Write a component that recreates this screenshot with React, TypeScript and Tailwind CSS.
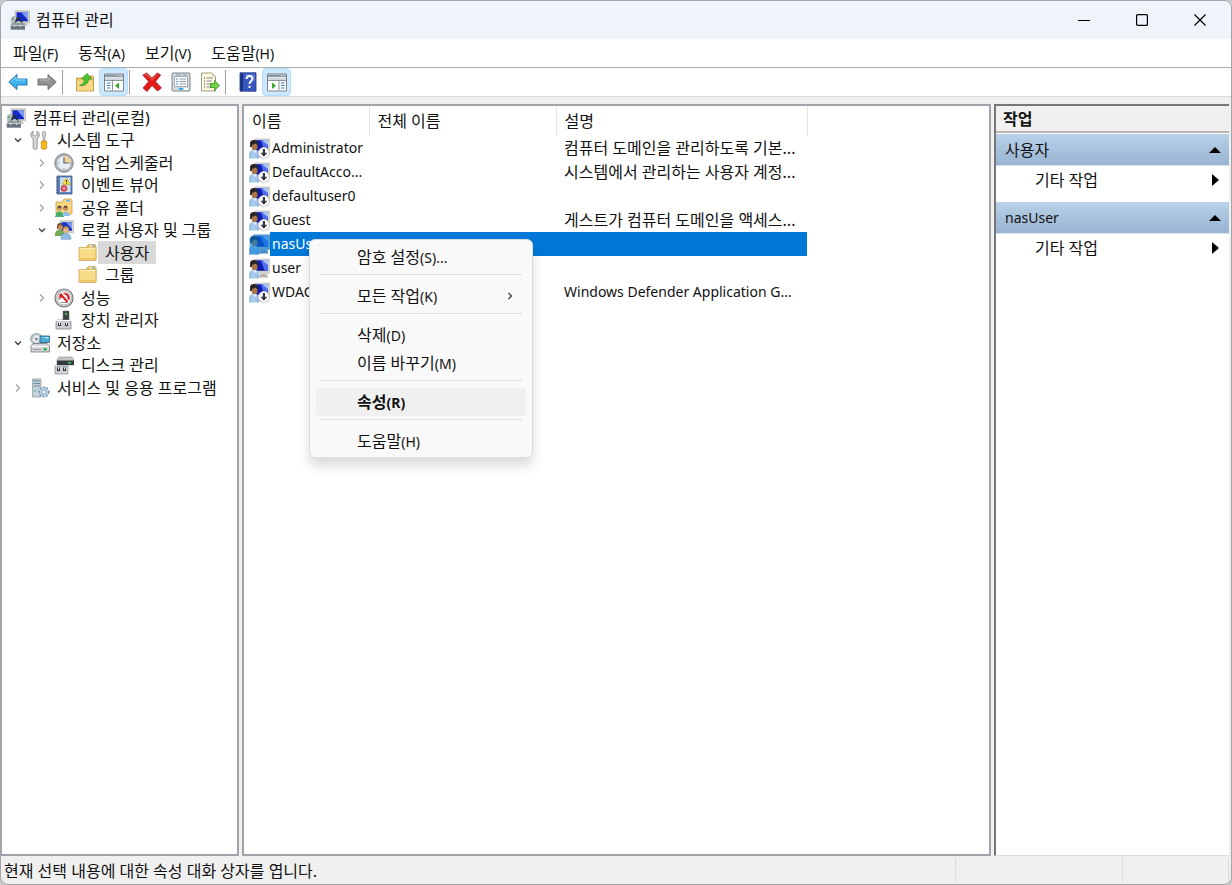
import { ReactNode } from "react";
import clsx from "clsx";

type IconProps = { className?: string };

interface TreeNode {
    id: string;
    label: string;
    depth: 0 | 1 | 2 | 3;
    icon: ReactNode;
    state?: "open" | "closed";
    selected?: boolean;
}

interface User {
    name: string;
    description: string;
    status: "disabled" | "active";
    selected?: boolean;
}

const Svg = ({ children, className = "w-5 h-5" }: IconProps & { children: ReactNode }) => (
    <svg viewBox="0 0 20 20" className={clsx("shrink-0", className)} aria-hidden="true">
        {children}
    </svg>
);

const ComputerIcon = () => (
    <Svg>
        <path d="M5 .8h14.500v12H5z" fill="#d6d3ca" stroke="#aaa79e" strokeWidth=".6" />
        <path d="M6.500 2.300h11.500v9H6.500z" fill="#1328c4" />
        <path d="M11 2.300h7v8z" fill="#7c9cf4" />
        <path d="M13 12.800h3l2 3h-6z" fill="#c4c2ba" />
        <path d="M.8 8l2-2h3v7H.8z" fill="#b8bcba" />
        <path d="M2 8.500h2v1.500H2z" fill="#42b15a" />
        <path d="M4.500 13l2.500-6h2.500l3.500 6-2.500-1-2-3-2 3z" fill="#26303c" />
        <path d="M2 13h12l1 2v4.500H.8v-4.500z" fill="#8f9ca3" />
        <path d="M.8 15h14.200v4.500H.8z" fill="#66757d" />
        <path d="M4 15h1v2H4zM10 15h1v2h-1zM1 15h14v.7H1z" fill="#dce3e6" />
    </Svg>
);

const ToolsIcon = () => (
    <Svg>
        <path d="M3 1.200v4l2 1 2-1v-4c2.500 1 3 4.500 1.200 6.500L7.200 9v9c0 1.800-4 1.800-4 0V9L2 7.700C0 5.500 1 2.200 3 1.200z" fill="#d5d8da" stroke="#7c8083" strokeWidth=".8" />
        <path d="M12.500 2l1.500-1 1.500 1v4l-.7 1v4h-1.600V7l-.7-1z" fill="#d0d4d6" stroke="#868b8e" strokeWidth=".7" />
        <path d="M11.700 11h4.600l.7 2-.7 2 .5 2.500c0 2.300-5.600 2.300-5.600 0l.5-2.500-.7-2z" fill="#f9b91e" stroke="#c67e08" strokeWidth=".7" />
    </Svg>
);

const ClockIcon = () => (
    <Svg>
        <circle cx="10" cy="10" r="9.200" fill="#b9bdc0" stroke="#747a80" />
        <circle cx="10" cy="10" r="7.300" fill="#e6edf4" stroke="#999fa5" strokeWidth=".7" />
        <path d="M10 3a7 7 0 0 1 7 7h-7z" fill="#f3d394" />
        <path d="M10 4.500V10h4.500" fill="none" stroke="#4f6270" strokeWidth="1.200" />
        <path d="M10 15v1.500M4 10h1.500M15 10h1.500" stroke="#8b959d" />
    </Svg>
);

const EventIcon = () => (
    <Svg>
        <path d="M3 1h15v18H3z" fill="#5a84bd" stroke="#395b8a" strokeWidth=".8" />
        <path d="M6 2.500h10.500v14.500H6z" fill="#d9e6f5" />
        <path d="M6 5h10M6 8h10M6 11h10M6 14h10" stroke="#9bb4d2" strokeWidth=".7" />
        <path d="M2 3h3M2 6h3M2 9h3M2 12h3M2 15h3M2 17.500h3" stroke="#596575" strokeWidth=".8" />
        <path d="M12.500 3l4 6.500h-8z" fill="#ffe233" stroke="#c49b09" strokeWidth=".6" />
        <path d="M12.500 5v2.200M12.500 8v.8" stroke="#222" />
        <circle cx="10" cy="13.500" r="3.200" fill="#dc3747" />
        <path d="M8.800 12.300l2.400 2.400m0-2.400l-2.400 2.400" stroke="#fff" />
    </Svg>
);

const FolderIcon = ({ className }: IconProps) => (
    <Svg className={className}>
        <path d="M9 3l1.500-1.500H17L18 3v13H9z" fill="#e9c877" stroke="#bb943d" strokeWidth=".6" />
        <path d="M12 2.300h4.500v1.500H12z" fill="#fff" />
        <path d="M14.500 2.300h2v1.500h-2z" fill="#3a9bdc" />
        <path d="M1 4.500h8L10.500 4H18v13.500H1z" fill="#f8dc88" stroke="#c99f46" strokeWidth=".7" />
        <path d="M2 15h15v2H2z" fill="#f0c869" />
        <path d="M2 5.500h15" stroke="#fdf0bb" />
    </Svg>
);

const SharedFolderIcon = () => (
    <Svg>
        <path d="M2 4h6l2-3h7l1 2v13H2z" fill="#f6d67e" stroke="#be9439" strokeWidth=".7" />
        <path d="M12 2h4v1.500h-4z" fill="#69b6e3" />
        <path d="M3.500 9q2-3 4 0v2.500h-4z" fill="#3c2d25" />
        <circle cx="5.500" cy="11" r="1.800" fill="#d39a67" />
        <path d="M9.500 9q2.500-3 4 0v2.500h-4z" fill="#493126" />
        <circle cx="11.500" cy="11" r="1.800" fill="#c98b5c" />
        <path d="M1.500 18.500q.5-5 4-5t4 5z" fill="#41ad69" />
        <path d="M8.500 18q.5-4.500 3.500-4.500t4 4.500z" fill="#91bfe5" />
        <path d="M1 18.500h9" stroke="#55b777" />
    </Svg>
);

const GroupIcon = () => (
    <Svg>
        <path d="M6 .8h13.500v12H6z" fill="#d9d7d0" stroke="#aaa" strokeWidth=".6" />
        <path d="M7.500 2.300h10.500v8.500H7.500z" fill="#1230ce" />
        <path d="M12 2.300h6v7z" fill="#7997f4" />
        <path d="M3 6c0-4 6-4 6 0v3H3z" fill="#76512f" />
        <circle cx="6.300" cy="7.500" r="2.500" fill="#c08c5d" />
        <path d="M.8 16c0-5 2-6 5-6s5 2 5 6z" fill="#75a858" />
        <path d="M9 9c0-4 6-4 6 0v3H9z" fill="#b58a45" />
        <circle cx="12" cy="10.500" r="2.600" fill="#e2b381" />
        <path d="M7 19.300c0-5 2-6 5-6s5 2 5 6z" fill="#8fbbe4" stroke="#668fb9" strokeWidth=".5" />
    </Svg>
);

const PerformanceIcon = () => (
    <Svg>
        <circle cx="10" cy="10" r="9" fill="#d9d9da" stroke="#77777a" strokeWidth="1.200" />
        <circle cx="10" cy="10" r="7" fill="#fff" stroke="#999" strokeWidth=".7" />
        <path d="M5 12V8l2-2.500M10 4.500v2M15 12V8.500M7 14.500h6" fill="none" stroke="#8b8b8b" />
        <path d="M6.500 6l7 8M6.500 6v4.500M10.500 5.500q4.500.5 4 6" fill="none" stroke="#df1720" strokeWidth="1.900" />
    </Svg>
);

const DeviceIcon = () => (
    <Svg>
        <path d="M9 1h6v10H9z" fill="#3d4444" stroke="#777" strokeWidth=".6" />
        <circle cx="12" cy="4" r="1" fill="#46ee4f" />
        <path d="M3 10h13l1 2v7H2v-7z" fill="#cbcbd0" stroke="#77777b" strokeWidth=".7" />
        <path d="M2 10.500h15" stroke="#f5f5f5" />
        <path d="M4 13h3v3H4zM11 13h3v3h-3z" fill="#33363a" />
        <path d="M5 13h1v2H5zM12 13h1v2h-1z" fill="#fff" />
    </Svg>
);

const StorageIcon = () => (
    <Svg>
        <ellipse cx="6.500" cy="6" rx="6" ry="5.500" fill="#bdc6ca" stroke="#7d898e" strokeWidth=".7" />
        <path d="M2 7l4-5 5 2-4 6z" fill="#edf1f3" />
        <circle cx="6.500" cy="6" r="1.600" fill="#838d91" />
        <path d="M10 3h9.500v6.500H10z" fill="#46a9d6" stroke="#26627f" strokeWidth=".8" />
        <path d="M11 4h7.500v2z" fill="#a3def6" />
        <path d="M1 13l2-2.500h14l2.500 2.500v6H1z" fill="#d4d4d8" stroke="#77777c" strokeWidth=".8" />
        <path d="M1.500 13.500H19" stroke="#fff" />
        <path d="M13.500 15h3v2.500h-3z" fill="#25b642" />
        <path d="M3 16.500h8" stroke="#9a9a9f" />
    </Svg>
);

const DiskIcon = () => (
    <Svg>
        <path d="M5 2h13l2 3v5H3V5z" fill="#c2c6c7" stroke="#868b8c" strokeWidth=".6" />
        <path d="M3 5.500h17V10H3z" fill="#353b3c" />
        <path d="M14 7h3v1.500h-3z" fill="#38d35f" />
        <path d="M1 11h13v8H1z" fill="#d2d2d6" stroke="#7b7b7f" strokeWidth=".6" />
        <path d="M3 12.500h3v3.500H3zM9 12.500h3v3.500H9z" fill="#33363a" />
        <path d="M4 12.500h1v2H4zM10 12.500h1v2h-1z" fill="#fff" />
    </Svg>
);

const ServicesIcon = () => (
    <Svg>
        <path d="M2.500 1h8.500v18H2.500z" fill="#c3d2dc" stroke="#8498a5" strokeWidth=".7" />
        <path d="M3.500 3h6.500M3.500 5.500h6.500M3.500 8h6.500" stroke="#6e8b9d" />
        <path d="M4 13h2" stroke="#42b158" />
        <circle cx="14" cy="14" r="4.700" fill="#b2cde2" stroke="#7798b3" strokeWidth="1.800" strokeDasharray="2 1.400" />
        <circle cx="14" cy="14" r="4" fill="#b8d0e3" />
        <circle cx="14" cy="14" r="2" fill="#f5fafd" stroke="#7295af" strokeWidth=".7" />
    </Svg>
);

const UserIcon = ({ status, selected }: { status: User["status"]; selected?: boolean }) => (
    <Svg className="w-[21px] h-[21px]">
        <path d="M4.500 .5H20v14.500H4.500z" fill="#d0cec9" />
        <path d="M6.500 2.200h11.500v10H6.500z" fill="#1019a9" />
        <path d="M11 2.200h7v10h-3z" fill="#4c6ff0" />
        <path d="M12.500 2.200h5.500v4.500z" fill="#b8caff" />
        <path d="M11 15h5.500l2 3.500H9z" fill="#b7b5b0" />
        <path d="M1 8.500V4q1-2.300 4-2t3.500 3v3.500z" fill="#2b2623" />
        <path d="M3 6.500l3.500-1 1.500 1.500v3l-2 2.500H4l-1.500-3z" fill="#a9754a" />
        <path d="M.5 19.500V13l2.500-1.500h4l2.500 2v6z" fill="#a3caee" />
        <path d="M4 12l1.500 2.500L7 12z" fill="#e8f3fc" />
        <path d="M.8 14v5.500M8.500 15.500v4" stroke="#6f9ac0" strokeWidth=".7" />
        {status === "disabled" && (
            <>
                <circle cx="14.200" cy="14.200" r="5.300" fill="#fff" stroke="#b0b0b0" strokeWidth=".6" />
                <path d="M13.200 10.500h2v3.500h2.300l-3.300 3.800-3.300-3.800h2.300z" fill="#33373c" />
            </>
        )}
        {selected && <path d="M.5 4l4-3.500H20V15h-2v3.500H9.500v1h-9z" fill="#0078d7" opacity=".6" />}
    </Svg>
);

const BackIcon = () => (
    <Svg>
        <path d="M.8 10l8.200-7.500V7h10v6H9v4.500z" fill="#3eb2ee" stroke="#1872ae" strokeWidth=".9" strokeLinejoin="round" />
        <path d="M3 9.500l5-4.500v3h9.500" fill="none" stroke="#91daff" />
    </Svg>
);

const ForwardIcon = () => (
    <Svg>
        <path d="M19.200 10L11 2.500V7H1v6h10v4.500z" fill="#929292" stroke="#666" strokeWidth=".9" strokeLinejoin="round" />
        <path d="M2.500 8H12V5" fill="none" stroke="#bbb" />
    </Svg>
);

const UpFolderIcon = () => (
    <Svg>
        <path d="M1.500 6h7l1-2h8.500l.5 2v13h-17z" fill="#edc869" stroke="#bb8d31" strokeWidth=".8" />
        <path d="M2 9h16v9.500H2z" fill="#f6d785" />
        <path d="M4.500 13.500C8 12.500 9.500 10.500 9.500 7H6.500L12 1.500 17 7h-3.500c0 4.500-3.500 7-9 6.500z" fill="#48c52c" stroke="#298a19" strokeWidth=".7" />
    </Svg>
);

const PaneIcon = ({ side }: { side: "left" | "right" }) => (
    <Svg>
        <path d="M.5 2h19v17H.5z" fill="#fff" stroke="#7e858c" />
        <path d="M1 2.500h18V5H1z" fill="#8c98a2" />
        <path d="M14 3.500h1M16.500 3.500h1" stroke="#fff" />
        <path d="M1 5.500h18V8H1z" fill="#d1d7dc" />
        <path d="M1 8.500h18" stroke="#8c969d" />
        {side === "left" ? (
            <>
                <path d="M8.500 8v10.500" stroke="#8a9197" />
                <path d="M3 11h3.500M3 13.500h3.500M3 16h3.500" stroke="#3b7ac1" strokeWidth="1.200" />
                <path d="M15 10.500v6.500l-4-3.300z" fill="#36aa21" />
            </>
        ) : (
            <>
                <path d="M12 8v10.500" stroke="#8a9197" />
                <path d="M14 11h3.500M14 13.500h3.500M14 16h3.500" stroke="#3b7ac1" strokeWidth="1.200" />
                <path d="M5 10.500v6.500l4-3.300z" fill="#36aa21" />
            </>
        )}
    </Svg>
);

const DeleteIcon = () => (
    <Svg>
        <path d="M.8 3l4-2L10 6l5.200-5 3.500 2L13.500 9.500l6 6.500-4 3-5.500-5.500-5 6L1 16l5.700-6.500z" fill="#e11a1c" stroke="#a61012" strokeWidth=".7" />
        <path d="M3 3l2-.5 5 5 5-5" fill="none" stroke="#ff8178" />
    </Svg>
);

const PropertiesIcon = () => (
    <Svg>
        <rect x="1" y="1" width="18" height="18" rx="1" fill="#d5dade" stroke="#7c848a" />
        <path d="M3.500 4.500h13v10h-13z" fill="#fff" stroke="#8d989f" strokeWidth=".8" />
        <path d="M5 3h5M12 3h4" stroke="#8b98a1" />
        <path d="M5 7h2M5 9.500h2M5 12h2" stroke="#4394cb" />
        <path d="M8.500 7H15M8.500 9.500H15M8.500 12H15" stroke="#8698a6" />
        <path d="M8 16h4v1.800H8z" fill="#24aaf0" />
        <path d="M13 16h4v1.800h-4z" fill="#fff" />
    </Svg>
);

const ExportIcon = () => (
    <Svg>
        <path d="M1.500 1h10.500l3.500 3.500V19h-14z" fill="#fff9df" stroke="#96907b" strokeWidth=".9" />
        <path d="M12 1v3.500h3.500z" fill="#ddd6bd" />
        <path d="M4 6h1M4 9h1M4 12h1M4 15h1" stroke="#333" />
        <path d="M6.500 6H13M6.500 9H12M6.500 12H11M6.500 15H12" stroke="#8c83a1" />
        <path d="M10.500 11.500h4V8.500l5 5-5 5v-3h-4z" fill="#70d249" stroke="#399022" strokeWidth=".8" />
    </Svg>
);

const HelpIcon = () => (
    <Svg>
        <path d="M2 .8h16v18.400H2z" fill="#3558c0" stroke="#20377e" strokeWidth=".8" />
        <path d="M2.400 1.200H5v17.600H2.400z" fill="#17317e" />
        <path d="M6 2h11v8z" fill="#6b8ce0" opacity=".6" />
        <path d="M8.500 7c0-4 6-4 6-.5 0 2.500-3 2.500-3 5.500M11.500 13.800v2.200" fill="none" stroke="#fff" strokeWidth="2" />
    </Svg>
);

const nodes: TreeNode[] = [
    { id: "root", label: "컴퓨터 관리(로컬)", depth: 0, icon: <ComputerIcon /> },
    { id: "system", label: "시스템 도구", depth: 1, icon: <ToolsIcon />, state: "open" },
    { id: "scheduler", label: "작업 스케줄러", depth: 2, icon: <ClockIcon />, state: "closed" },
    { id: "event", label: "이벤트 뷰어", depth: 2, icon: <EventIcon />, state: "closed" },
    { id: "shared", label: "공유 폴더", depth: 2, icon: <SharedFolderIcon />, state: "closed" },
    { id: "local", label: "로컬 사용자 및 그룹", depth: 2, icon: <GroupIcon />, state: "open" },
    { id: "users", label: "사용자", depth: 3, icon: <FolderIcon />, selected: true },
    { id: "groups", label: "그룹", depth: 3, icon: <FolderIcon /> },
    { id: "performance", label: "성능", depth: 2, icon: <PerformanceIcon />, state: "closed" },
    { id: "device", label: "장치 관리자", depth: 2, icon: <DeviceIcon /> },
    { id: "storage", label: "저장소", depth: 1, icon: <StorageIcon />, state: "open" },
    { id: "disk", label: "디스크 관리", depth: 2, icon: <DiskIcon /> },
    { id: "services", label: "서비스 및 응용 프로그램", depth: 1, icon: <ServicesIcon />, state: "closed" },
];

const users: User[] = [
    { name: "Administrator", description: "컴퓨터 도메인을 관리하도록 기본...", status: "disabled" },
    { name: "DefaultAcco...", description: "시스템에서 관리하는 사용자 계정...", status: "disabled" },
    { name: "defaultuser0", description: "", status: "disabled" },
    { name: "Guest", description: "게스트가 컴퓨터 도메인을 액세스...", status: "disabled" },
    { name: "nasUser", description: "", status: "active", selected: true },
    { name: "user", description: "", status: "active" },
    { name: "WDAGUtility...", description: "Windows Defender Application G...", status: "disabled" },
];

const indent = {
    0: "pl-1",
    1: "pl-[3px]",
    2: "pl-[27px]",
    3: "pl-[51px]",
};

// Latin letters are set one step smaller than Hangul
const Label = ({ text, hotkey, tail }: { text: string; hotkey?: string; tail?: string }) => (
    <span className="whitespace-nowrap">
        {text}
        {hotkey && <span className="text-sm leading-none">({hotkey}){tail}</span>}
    </span>
);

const Chevron = ({ state }: { state: "open" | "closed" }) => (
    <svg viewBox="0 0 10 10" className="w-[10px] h-[10px]" fill="none" aria-hidden="true">
        {state === "open" ? (
            <path d="M2 3.500l3 3 3-3" stroke="#404040" strokeWidth="1.300" />
        ) : (
            <path d="M3 1.500L6.500 5 3 8.500" stroke="#a0a0a0" strokeWidth="1.200" />
        )}
    </svg>
);

const TitleBar = () => (
    <header className="flex h-[38px] items-center bg-[#eff3fa] pl-[9px] pr-[2px]">
        <ComputerIcon />
        <h1 className="ml-[6px] flex-1 whitespace-nowrap">컴퓨터 관리</h1>
        <button aria-label="최소화" className="flex h-full w-[58px] items-center justify-center">
            <svg viewBox="0 0 12 12" className="w-3 h-3"><path d="M0 6.500h12" stroke="#000" /></svg>
        </button>
        <button aria-label="최대화" className="flex h-full w-[58px] items-center justify-center">
            <svg viewBox="0 0 12 12" className="w-3 h-3"><rect x=".6" y=".6" width="10.800" height="10.800" rx="1" fill="none" stroke="#000" strokeWidth="1.200" /></svg>
        </button>
        <button aria-label="닫기" className="flex h-full w-[58px] items-center justify-center">
            <svg viewBox="0 0 12 12" className="w-3 h-3"><path d="M.5 .5l11 11m0-11l-11 11" stroke="#000" strokeWidth="1.200" /></svg>
        </button>
    </header>
);

const menus = [
    { text: "파일", hotkey: "F" },
    { text: "동작", hotkey: "A" },
    { text: "보기", hotkey: "V" },
    { text: "도움말", hotkey: "H" },
];

const MenuBar = () => (
    <nav className="flex h-[29px] items-center gap-5 border-b border-[#a5adb5] bg-white pl-3">
        {menus.map((menu) => (
            <button key={menu.hotkey}>
                <Label text={menu.text} hotkey={menu.hotkey} />
            </button>
        ))}
    </nav>
);

const ToolButton = ({ label, active, children }: { label: string; active?: boolean; children: ReactNode }) => (
    <button
        aria-label={label}
        aria-pressed={active}
        className={clsx("flex h-7 w-[29px] items-center justify-center", active && "rounded-sm border border-[#b5dcfb] bg-[#cce8ff]")}
    >
        {children}
    </button>
);

const ToolSeparator = () => <div className="ml-px mr-[7px] h-6 w-px bg-[#a0a0a0]" />;

const Toolbar = () => (
    <div className="flex h-[29px] items-center border-b border-[#dcdcdc] bg-white pl-[2px]">
        <ToolButton label="뒤로"><BackIcon /></ToolButton>
        <ToolButton label="앞으로"><ForwardIcon /></ToolButton>
        <ToolSeparator />
        <ToolButton label="한 수준 위로"><UpFolderIcon /></ToolButton>
        <ToolButton label="콘솔 트리 표시" active><PaneIcon side="left" /></ToolButton>
        <ToolSeparator />
        <ToolButton label="삭제"><DeleteIcon /></ToolButton>
        <ToolButton label="속성"><PropertiesIcon /></ToolButton>
        <ToolButton label="목록 내보내기"><ExportIcon /></ToolButton>
        <ToolSeparator />
        <ToolButton label="도움말"><HelpIcon /></ToolButton>
        <ToolButton label="작업창 표시" active><PaneIcon side="right" /></ToolButton>
    </div>
);

const ConsoleTree = () => (
    <aside className="w-[238px] shrink-0 overflow-hidden border-2 border-l border-[#a0a4aa] bg-white">
        <ul>
            {nodes.map((node) => (
                <li key={node.id} className={clsx("flex h-[23px] items-center even:h-[22px]", indent[node.depth])}>
                    {node.depth > 0 && (
                        <span className="flex w-[25px] shrink-0 justify-center">
                            {node.state && <Chevron state={node.state} />}
                        </span>
                    )}
                    {node.icon}
                    <span
                        className={clsx(
                            "flex h-full items-center whitespace-nowrap px-[7px]",
                            node.selected && "bg-[#d9d9d9]"
                        )}
                    >
                        {node.label}
                    </span>
                </li>
            ))}
        </ul>
    </aside>
);

const ContextItem = ({ children, active, submenu }: { children: ReactNode; active?: boolean; submenu?: boolean }) => (
    <button
        role="menuitem"
        className={clsx(
            "mx-[6px] flex h-7 items-center justify-between rounded-sm pl-[41px] pr-[11px]",
            active && "bg-[#f0f0f0] font-bold"
        )}
    >
        {children}
        {submenu && (
            <svg viewBox="0 0 10 10" className="w-[10px] h-[10px]" fill="none" aria-hidden="true">
                <path d="M3.500 2l3 3-3 3" stroke="#333" strokeWidth="1.200" />
            </svg>
        )}
    </button>
);

const ContextSeparator = () => <div role="separator" className="mx-[10px] mb-[7px] mt-[3px] h-px bg-[#dedede]" />;

const ContextMenu = () => (
    <div
        role="menu"
        className="absolute left-[65px] top-[133px] flex w-[224px] flex-col rounded-md border border-[#dcdcdc] bg-[#f9f9f9] pb-[2px] pt-[3px] shadow-[0_8px_12px_rgba(0,0,0,0.14)]"
    >
        <ContextItem><Label text="암호 설정" hotkey="S" tail="..." /></ContextItem>
        <ContextSeparator />
        <ContextItem submenu><Label text="모든 작업" hotkey="K" /></ContextItem>
        <ContextSeparator />
        <ContextItem><Label text="삭제" hotkey="D" /></ContextItem>
        <ContextItem><Label text="이름 바꾸기" hotkey="M" /></ContextItem>
        <ContextSeparator />
        <ContextItem active><Label text="속성" hotkey="R" /></ContextItem>
        <ContextSeparator />
        <ContextItem><Label text="도움말" hotkey="H" /></ContextItem>
    </div>
);

const UserList = () => (
    <main className="relative min-w-0 flex-1 border-2 border-[#a0a4aa] bg-white">
        <table className="w-[563px] table-fixed border-collapse text-left">
            <colgroup>
                <col className="w-[125px]" />
                <col className="w-[187px]" />
                <col className="w-[251px]" />
            </colgroup>
            <thead>
                <tr className="h-[30px]">
                    <th className="border-r border-[#e5e5e5] p-0 pl-2 font-normal">이름</th>
                    <th className="border-r border-[#e5e5e5] p-0 pl-2 font-normal">전체 이름</th>
                    <th className="border-r border-[#e5e5e5] p-0 pl-2 font-normal">설명</th>
                </tr>
            </thead>
            <tbody>
                {users.map((user) => (
                    <tr key={user.name} className="h-6">
                        <td className="p-0">
                            <div className="flex h-6 items-center pl-[5px]">
                                <UserIcon status={user.status} selected={user.selected} />
                                <span
                                    className={clsx(
                                        "flex h-full flex-1 items-center whitespace-nowrap pl-[2px] text-sm",
                                        user.selected && "bg-[#0078d7] text-white"
                                    )}
                                >
                                    {user.name}
                                </span>
                            </div>
                        </td>
                        <td className={clsx("p-0", user.selected && "bg-[#0078d7]")}></td>
                        <td
                            className={clsx(
                                "whitespace-nowrap p-0 pl-2",
                                user.selected && "bg-[#0078d7]",
                                user.description.startsWith("W") && "text-sm"
                            )}
                        >
                            {user.description}
                        </td>
                    </tr>
                ))}
            </tbody>
        </table>
        <ContextMenu />
    </main>
);

const ActionSection = ({ title, latin }: { title: string; latin?: boolean }) => (
    <section className="mb-2">
        <h3
            className={clsx(
                "flex h-8 items-center justify-between border-b border-[#d7e4f2] bg-linear-to-b from-[#b9d1ea] to-[#99b4d1] pl-[9px] pr-2",
                latin && "text-sm"
            )}
        >
            {title}
            <svg viewBox="0 0 12 6" className="w-3 h-[6px]" aria-hidden="true"><path d="M0 6l6-6 6 6z" /></svg>
        </h3>
        <button className="flex h-7 w-full items-center justify-between pl-[39px] pr-[10px]">
            기타 작업
            <svg viewBox="0 0 7 12" className="w-[7px] h-3" aria-hidden="true"><path d="M0 0l7 6-7 6z" /></svg>
        </button>
    </section>
);

const ActionsPane = () => (
    <aside className="mr-[2px] w-[235px] shrink-0 border-b border-l-2 border-t-2 border-b-[#dcdcdc] border-l-[#777] border-t-[#777] bg-white">
        <h2 className="mb-px flex h-[27px] items-center border-b-2 border-[#b4b4b4] bg-[#f0f0f0] pl-[7px] font-bold">작업</h2>
        <ActionSection title="사용자" />
        <ActionSection title="nasUser" latin />
    </aside>
);

const StatusBar = () => (
    <footer className="flex h-7 items-center">
        <p className="flex-1 whitespace-nowrap pl-[3px] pt-px">현재 선택 내용에 대한 속성 대화 상자를 엽니다.</p>
        <div className="h-6 w-[167px] border-l border-[#dcdcdc]"></div>
        <div className="mr-[2px] h-6 w-[107px] border-x border-[#dcdcdc]"></div>
    </footer>
);

const App = () => {
    return (
        <div className="flex min-h-screen bg-[#c9cacc] font-['Noto_Sans','Noto_Sans_CJK_KR',sans-serif] text-[16px] leading-5 text-[#111]">
            <div className="flex min-w-0 flex-1 flex-col overflow-hidden rounded-lg border border-[#a3a5a8] bg-[#f0f0f0]">
                <TitleBar />
                <MenuBar />
                <Toolbar />
                <div className="flex flex-1 gap-[3px] pt-[7px]">
                    <ConsoleTree />
                    <UserList />
                    <ActionsPane />
                </div>
                <StatusBar />
            </div>
        </div>
    );
};

export default App;
